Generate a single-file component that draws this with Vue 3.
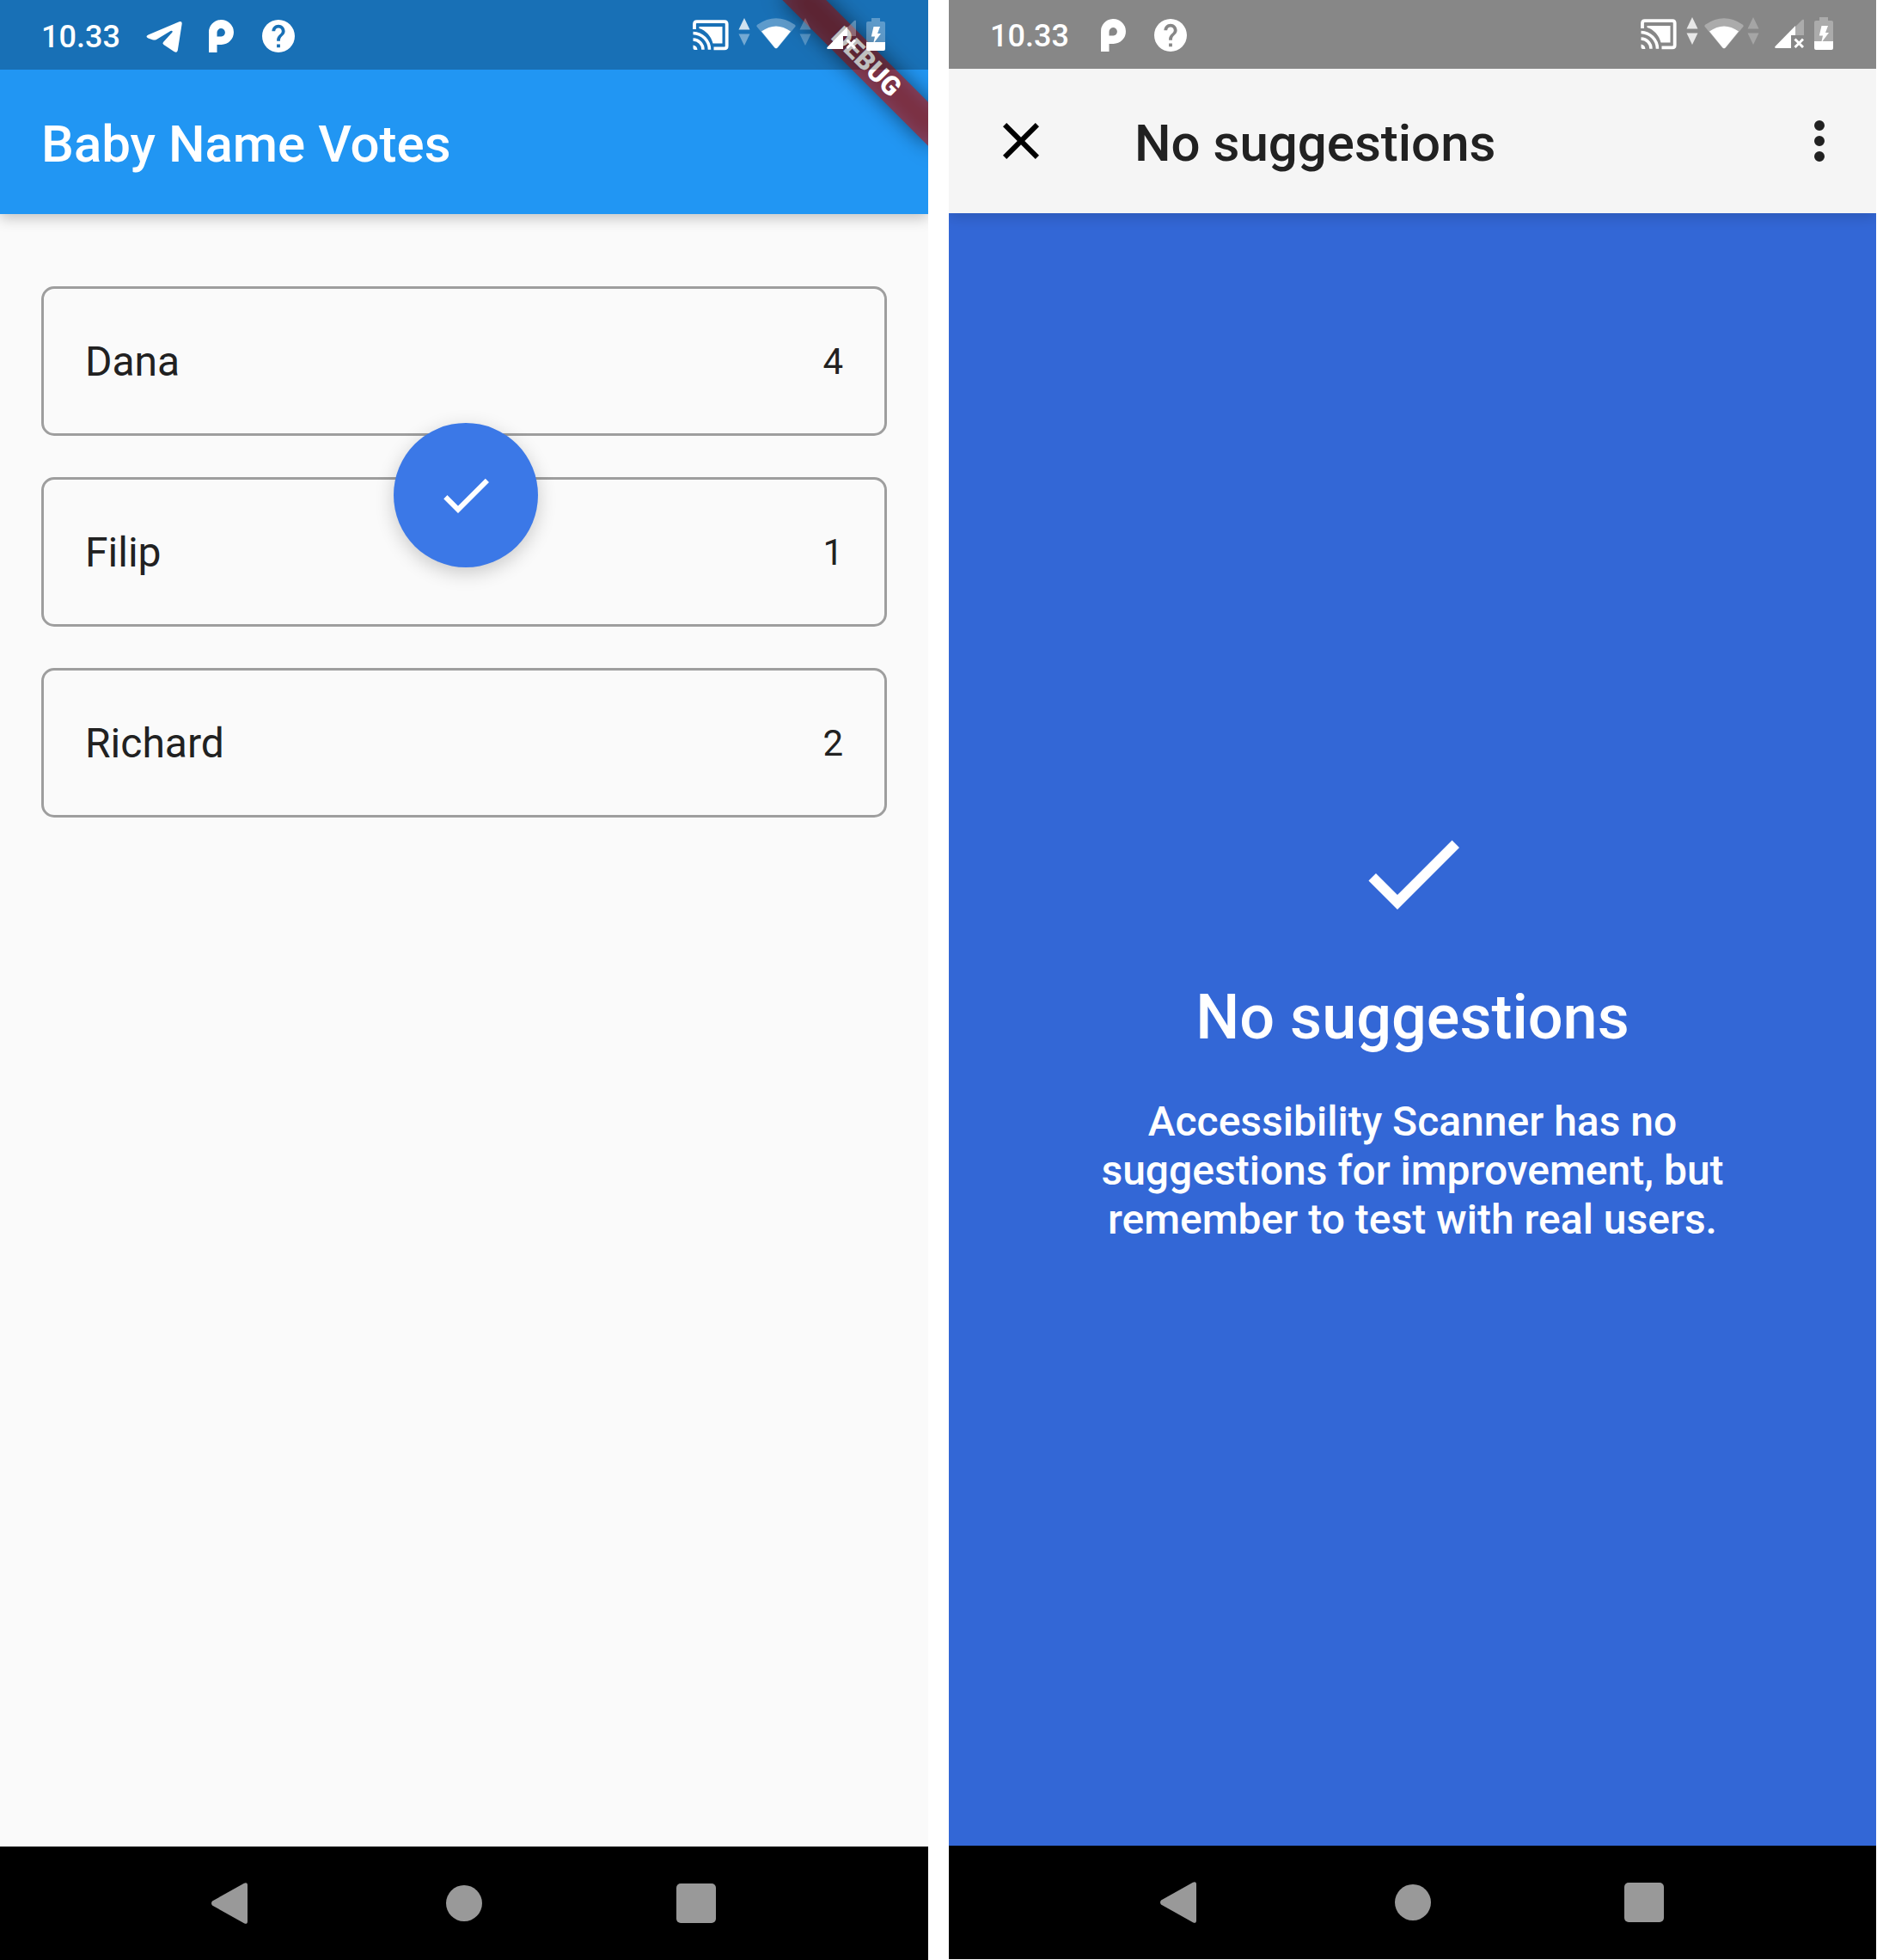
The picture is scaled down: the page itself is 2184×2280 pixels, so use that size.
<script setup>
const votes = [
  { name: 'Dana', count: 4 },
  { name: 'Filip', count: 1 },
  { name: 'Richard', count: 2 },
]

const phoneTrays = {
  votes: { notifications: ['telegram', 'parking', 'help'], download: 'mid' },
  scanner: { notifications: ['parking', 'help'], download: 'on' },
}
</script>

<template>
  <svg class="sprite" aria-hidden="true">
    <symbol id="telegram" viewBox="0 0 66 80">
      <path
        fill="currentColor"
        d="M13.5 39.5 49.5 24.2Q53 23 52.7 26.5L47.8 57.5Q47 61 43.5 59L31.5 51Q29.5 49.5 31 48L41.5 36.5Q42.5 34 39.5 35L23 45Q21 46 18.5 45.3L13.5 43.5Q9.5 41.5 13.5 39.5Z"
      />
    </symbol>
    <symbol id="parking" viewBox="0 0 66 80">
      <path
        fill="currentColor"
        fill-rule="evenodd"
        d="M18 60V37.5A14.5 14.5 0 1 1 32.500 51H27.5V60ZM27.5 41.5H32.500A4.700 4.700 0 1 0 27.5 37Z"
      />
    </symbol>
    <symbol id="help" viewBox="0 0 66 80">
      <g transform="translate(10.2 18.2) scale(1.9)">
        <path
          fill="currentColor"
          d="M12 2C6.480 2 2 6.480 2 12s4.480 10 10 10 10-4.480 10-10S17.520 2 12 2zm1 17h-2v-2h2v2zm2.070-7.750l-.9.920C13.450 12.900 13 13.500 13 15h-2v-.5c0-1.100.45-2.100 1.170-2.830l1.240-1.260c.37-.36.59-.86.59-1.410 0-1.100-.9-2-2-2s-2 .9-2 2H8c0-2.210 1.790-4 4-4s4 1.790 4 4c0 .88-.36 1.680-.93 2.250z"
        />
      </g>
    </symbol>
    <symbol id="cast" viewBox="0 0 42 36">
      <path
        fill="none"
        stroke="currentColor"
        stroke-width="3.8"
        d="M2 11V5Q2 2.2 4.800 2.2H37Q39.700 2.2 39.700 5V30.5Q39.700 33.3 37 33.3H24.5"
      />
      <path fill="currentColor" d="M7.5 8H34.5V27.5H23.5C21.5 19 15.5 12.5 7.5 10Z" />
      <path
        fill="none"
        stroke="currentColor"
        stroke-width="3.5"
        d="M.5 15.5A19.500 19.500 0 0 1 19.5 34.8M.5 23A11.800 11.800 0 0 1 12 34.8"
      />
      <path fill="currentColor" d="M.5 29.5A6 6 0 0 1 5.5 35H2.5Q.5 35 .5 33Z" />
    </symbol>
    <symbol id="arrow-up" viewBox="0 0 14 14">
      <path fill="#fff" d="M7 0 13.5 13.5H.5Z" />
    </symbol>
    <symbol id="wifi" viewBox="0 0 46 36">
      <path fill="#fff" fill-opacity=".3" d="M1 10.5Q-.5 9 1.5 7.500Q23-7 44.5 7.500Q46.5 9 45 10.5L25 34.5Q23 36.5 21 34.5Z" />
      <path fill="#fff" d="M6 15.5Q23 3.5 40 15.5L24.5 34.5Q23 36 21.5 34.5Z" />
    </symbol>
    <symbol id="signal" viewBox="0 0 34 34">
      <path fill="#fff" fill-opacity=".3" d="M24 9 32 1Q34-.5 34 2V19H24Z" />
      <path fill="#fff" d="M24 8V19H19V34H1.500Q-.5 34 .5 32Z" />
      <path fill="none" stroke="#fff" stroke-width="3" d="M23.5 23.5 33 33M33 23.5 23.5 33" />
    </symbol>
    <symbol id="battery" viewBox="0 0 22 38">
      <path fill="#fff" fill-opacity=".3" d="M6 0H16V4H20Q22 4 22 6V28H0V6Q0 4 2 4H6Z" />
      <path fill="#fff" d="M0 28H22V36Q22 38 20 38H2Q0 38 0 36ZM8.5 10H16L13 18H17L9.5 28H8.500L10 21.500H5.800Z" />
    </symbol>
    <symbol id="check" viewBox="0 0 24 24">
      <path fill="currentColor" d="M9 16.17 4.83 12l-1.42 1.41L9 19 21 7l-1.41-1.41z" />
    </symbol>
    <symbol id="close" viewBox="0 0 24 24">
      <path
        fill="currentColor"
        d="M19 6.41 17.59 5 12 10.59 6.41 5 5 6.41 10.59 12 5 17.59 6.41 19 12 13.41 17.59 19 19 17.59 13.41 12z"
      />
    </symbol>
    <symbol id="more" viewBox="0 0 24 24">
      <path
        fill="currentColor"
        d="M12 8a2 2 0 1 0 0-4 2 2 0 0 0 0 4zm0 2a2 2 0 1 0 0 4 2 2 0 0 0 0-4zm0 6a2 2 0 1 0 0 4 2 2 0 0 0 0-4z"
      />
    </symbol>
    <symbol id="nav-back" viewBox="0 0 48 48">
      <path fill="currentColor" d="M1 21.5Q-1 24 1 26.5L38 47.3Q42 49 42 45V3Q42-1 38 .7Z" />
    </symbol>
    <symbol id="nav-home" viewBox="0 0 48 48">
      <circle fill="currentColor" cx="24" cy="24" r="21" />
    </symbol>
    <symbol id="nav-recent" viewBox="0 0 48 48">
      <rect fill="currentColor" x="1" y="1" width="46" height="46" rx="5" />
    </symbol>
  </svg>

  <main class="screens">
    <section v-for="(tray, id) in phoneTrays" :key="id" class="phone" :class="id">
      <header class="top">
        <div class="status">
          <time class="clock">10.33</time>
          <div class="notifications">
            <svg v-for="icon in tray.notifications" :key="icon" class="notification">
              <use :href="'#' + icon" />
            </svg>
          </div>
          <div class="tray">
            <svg class="cast"><use href="#cast" /></svg>
            <span class="traffic">
              <svg class="arrow on"><use href="#arrow-up" /></svg>
              <svg class="arrow down" :class="tray.download"><use href="#arrow-up" /></svg>
            </span>
            <svg class="wifi"><use href="#wifi" /></svg>
            <span class="traffic">
              <svg class="arrow"><use href="#arrow-up" /></svg>
              <svg class="arrow down"><use href="#arrow-up" /></svg>
            </span>
            <svg class="signal"><use href="#signal" /></svg>
            <svg class="battery"><use href="#battery" /></svg>
          </div>
        </div>

        <div v-if="id === 'votes'" class="app-bar">
          <h1 class="title">Baby Name Votes</h1>
        </div>
        <div v-else class="app-bar">
          <button class="icon-button" type="button" aria-label="Close">
            <svg class="icon"><use href="#close" /></svg>
          </button>
          <h1 class="title">No suggestions</h1>
          <button class="icon-button more" type="button" aria-label="More options">
            <svg class="icon"><use href="#more" /></svg>
          </button>
        </div>
        <div v-if="id === 'votes'" class="banner"><span class="banner-label">DEBUG</span></div>
      </header>

      <div v-if="id === 'votes'" class="body list-body">
        <ul class="cards">
          <li v-for="vote in votes" :key="vote.name" class="card">
            <span class="name">{{ vote.name }}</span>
            <span class="count">{{ vote.count }}</span>
          </li>
        </ul>
        <button class="fab" type="button" aria-label="Run scan">
          <svg class="icon"><use href="#check" /></svg>
        </button>
      </div>
      <div v-else class="body result">
        <svg class="big-check"><use href="#check" /></svg>
        <h2 class="headline">No suggestions</h2>
        <p class="message">
          Accessibility Scanner has no suggestions for improvement, but remember to test with real users.
        </p>
      </div>

      <nav class="nav" aria-label="System">
        <button class="nav-button" type="button" aria-label="Back">
          <svg class="nav-icon"><use href="#nav-back" /></svg>
        </button>
        <button class="nav-button" type="button" aria-label="Home">
          <svg class="nav-icon"><use href="#nav-home" /></svg>
        </button>
        <button class="nav-button" type="button" aria-label="Recent apps">
          <svg class="nav-icon"><use href="#nav-recent" /></svg>
        </button>
      </nav>
    </section>
  </main>
</template>

<style>
body {
  margin: 0;
  background: #fff;
}
</style>

<style scoped>
.sprite {
  position: absolute;
  width: 0;
  height: 0;
}

.screens {
  display: grid;
  grid-template-columns: 1fr 1fr;
  gap: 24px;
  min-height: 100vh;
  font-family: Roboto, sans-serif;
  color: #212121;
}

button {
  display: flex;
  align-items: center;
  justify-content: center;
  padding: 0;
  border: 0;
  background: none;
  color: inherit;
  cursor: pointer;
}

svg {
  display: block;
  flex: none;
}

.phone {
  display: flex;
  flex-direction: column;
  min-width: 0;
  overflow: hidden;
}

.scanner {
  margin: 0 1px 1px 0;
}

.top {
  position: relative;
  z-index: 1;
  overflow: hidden;
}

.votes .top {
  background: #2196f3;
  color: #fff;
  box-shadow: 0 5px 15px rgba(0, 0, 0, 0.22);
}

.scanner .top {
  background: #f5f5f5;
  box-shadow: 0 5px 15px rgba(0, 0, 0, 0.14);
}

.status {
  position: relative;
  z-index: 2;
  display: flex;
  align-items: center;
  box-sizing: border-box;
  height: 81px;
  padding: 0 50px 0 48px;
  color: #fff;
  background: rgba(0, 0, 0, 0.25);
}

.scanner .status {
  height: 80px;
  background: #878787;
}

.clock {
  width: 111px;
  padding-top: 4px;
  font-size: 36px;
  font-weight: 500;
  line-height: 44px;
}

.notifications {
  display: flex;
  flex: 1;
}

.notification {
  width: 66px;
  height: 80px;
}

.tray {
  display: flex;
  align-items: center;
}

.cast {
  width: 42px;
  height: 36px;
}

.traffic {
  display: grid;
  gap: 4px;
  margin: 0 4px 8px;
}

.cast + .traffic {
  margin-left: 11px;
  margin-right: 7px;
}

.arrow {
  width: 14px;
  height: 14px;
  opacity: 0.25;
}

.arrow.mid {
  opacity: 0.4;
}

.arrow.on {
  opacity: 0.8;
}

.down {
  transform: rotate(180deg);
}

.wifi {
  width: 46px;
  height: 36px;
  margin-bottom: 3px;
}

.signal {
  width: 34px;
  height: 34px;
  margin: 0 12px 2px 14px;
}

.battery {
  width: 22px;
  height: 38px;
  margin-bottom: 2px;
}

.app-bar {
  display: flex;
  align-items: center;
  height: 168px;
  padding: 0 48px;
}

.title {
  margin: 0;
  padding-top: 6px;
  font-size: 60px;
  font-weight: 500;
  line-height: 72px;
}

.scanner .app-bar {
  padding: 0;
}

.scanner .title {
  flex: 1;
  padding-left: 48px;
}

.icon-button {
  width: 168px;
  color: #000;
}

.icon-button.more {
  width: 132px;
  color: #212121;
}

.icon {
  width: 72px;
  height: 72px;
}

.banner {
  position: absolute;
  z-index: 1;
  top: 84px;
  right: -120px;
  width: 240px;
  height: 36px;
  transform: rotate(45deg);
  transform-origin: 120px -84px;
}

.banner::before {
  content: '';
  position: absolute;
  z-index: -1;
  inset: 0;
  background: rgba(0, 0, 0, 0.5);
  filter: blur(12px);
}

.banner-label {
  display: block;
  background: rgba(183, 28, 28, 0.63);
  font-size: 31px;
  font-weight: 900;
  line-height: 36px;
  text-align: center;
}

.body {
  flex: 1;
}

.list-body {
  position: relative;
  padding: 84px 48px 0;
  background: #fafafa;
}

.cards {
  display: grid;
  gap: 48px;
  margin: 0;
  padding: 0;
  list-style: none;
}

.card {
  display: flex;
  align-items: center;
  justify-content: space-between;
  padding: 57px 48px 55px;
  border: 3px solid #9e9e9e;
  border-radius: 15px;
}

.name {
  font-size: 48px;
  line-height: 56px;
}

.count {
  font-size: 42px;
  line-height: 56px;
}

.fab {
  position: absolute;
  top: 243px;
  left: calc(50% - 82px);
  width: 168px;
  height: 168px;
  border-radius: 50%;
  background: #3b78e7;
  color: #fff;
  box-shadow: 0 6px 22px rgba(0, 0, 0, 0.2);
}

.result {
  display: flex;
  flex-direction: column;
  align-items: center;
  justify-content: center;
  padding: 0 168px 4px;
  background: #3367d6;
  color: #fff;
  text-align: center;
}

.big-check {
  width: 144px;
  height: 144px;
}

.headline {
  margin: 54px 0 50px;
  font-size: 72px;
  font-weight: 500;
  line-height: 84px;
}

.message {
  margin: 0;
  font-size: 48px;
  font-weight: 500;
  line-height: 57px;
}

.nav {
  display: flex;
  justify-content: center;
  height: 132px;
  background: #000;
  color: #999;
}

.nav-button {
  flex: 0 0 25%;
}

.nav-icon {
  width: 48px;
  height: 48px;
}
</style>
